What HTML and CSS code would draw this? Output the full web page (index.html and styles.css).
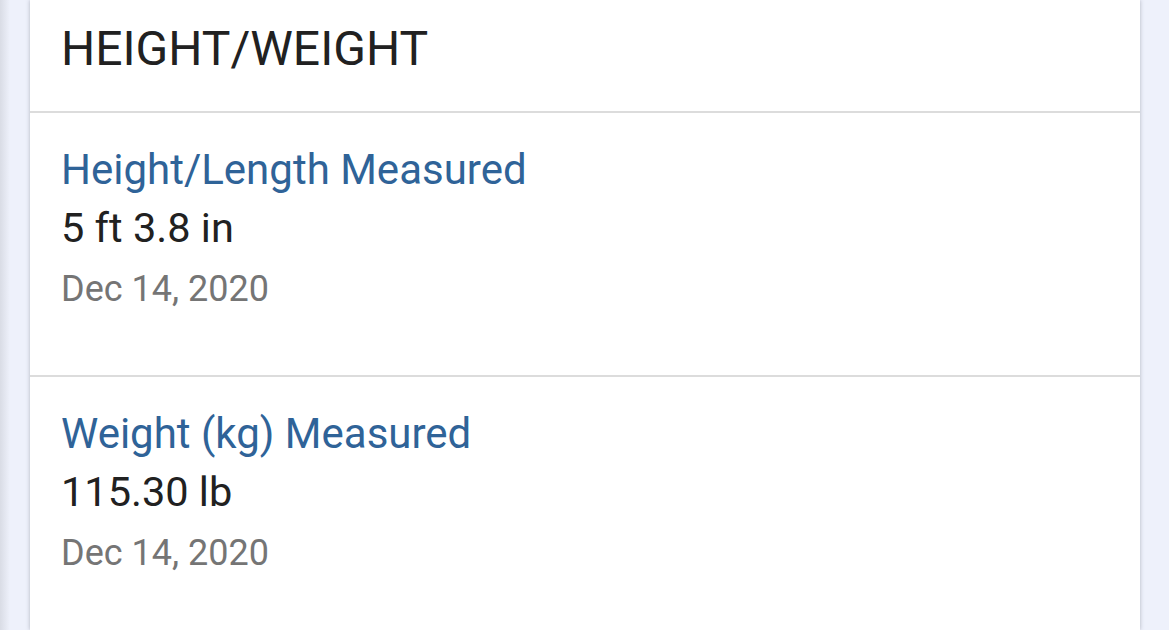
FILE: index.html
```html
<!DOCTYPE html>
<html>
<head>
<meta charset="utf-8">
<link rel="stylesheet" href="styles.css">
</head>
<body>
<div class="page">
  <section class="card">
    <header class="card-header">HEIGHT/WEIGHT</header>
    <div class="item">
      <div class="item-title">Height/Length Measured</div>
      <div class="item-value">5 ft 3.8 in</div>
      <div class="item-date">Dec 14, 2020</div>
    </div>
    <div class="item">
      <div class="item-title">Weight (kg) Measured</div>
      <div class="item-value">115.30 lb</div>
      <div class="item-date">Dec 14, 2020</div>
    </div>
  </section>
</div>
</body>
</html>
```
FILE: styles.css
```css
html, body {
  margin: 0;
  padding: 0;
  height: 100%;
}
body {
  background: linear-gradient(to right, #d9dce5 0px, #eef1fb 10px, #eef1fb 100%);
  font-family: Roboto, "Noto Sans", sans-serif;
  overflow: hidden;
}
.page {
  height: 100%;
  display: flex;
  padding: 0 29px 0 30px;
}
.card {
  flex: 1;
  background: #ffffff;
  box-shadow: 0 0 4px rgba(60, 64, 80, 0.35);
  display: flex;
  flex-direction: column;
  overflow: hidden;
}
.card-header {
  flex-shrink: 0;
  height: 113px;
  box-sizing: border-box;
  padding: 20px 31px 0;
  font-size: 48px;
  line-height: 57px;
  color: #212121;
  border-bottom: 2px solid #dcdcdc;
}
.item {
  flex-shrink: 0;
  height: 264px;
  box-sizing: border-box;
  padding: 29px 31px 0;
  border-bottom: 2px solid #dcdcdc;
}
.item-title {
  font-size: 42px;
  line-height: 56px;
  color: #2f6398;
}
.item-value {
  font-size: 41.5px;
  line-height: 60px;
  color: #212121;
}
.item-date {
  font-size: 36px;
  line-height: 63px;
  color: #757575;
}
```
